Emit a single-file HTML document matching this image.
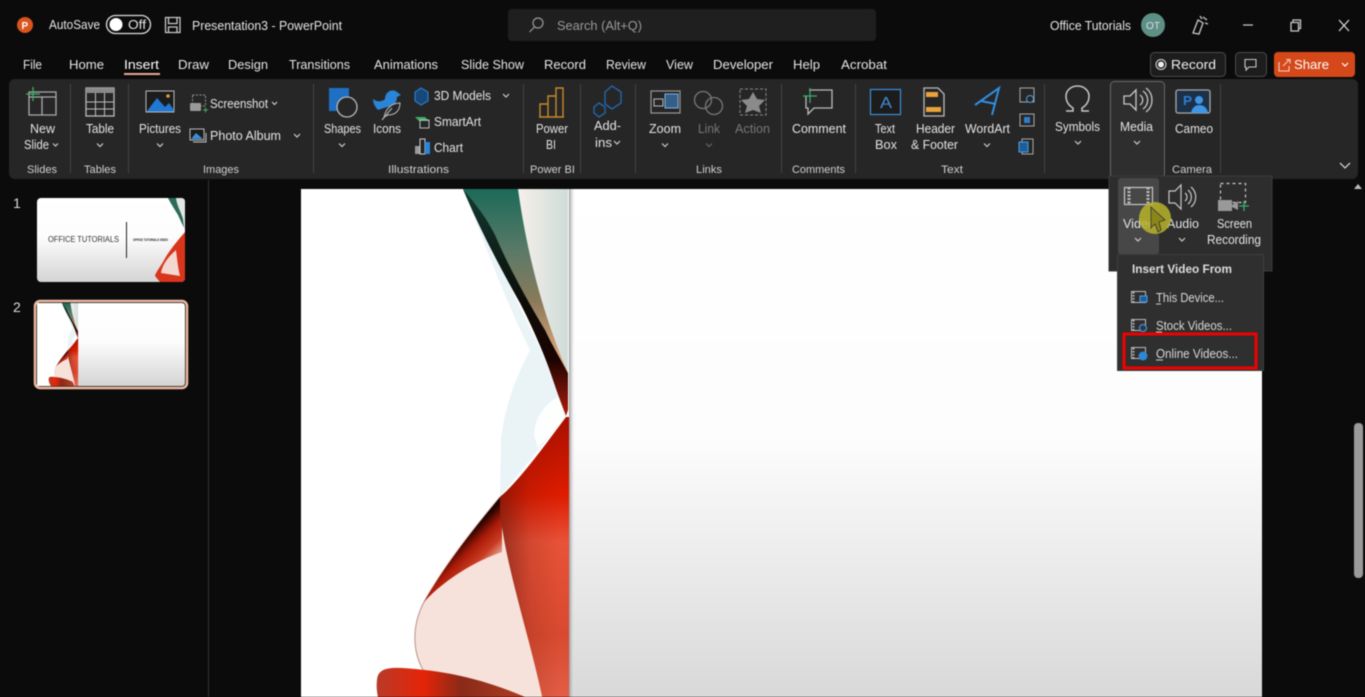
<!DOCTYPE html>
<html><head><meta charset="utf-8"><style>
html,body{margin:0;padding:0;background:#0b0b0b;overflow:hidden}
svg{display:block;filter:blur(.45px)}
text{font-family:"Liberation Sans",sans-serif;font-size:12.5px;fill:#e4e4e4}
.g{font-size:11px;fill:#d0d0d0}
.d{fill:#777}
.ic{fill:none;stroke:#c8c8c8;stroke-width:1.3}
.ch{fill:none;stroke:#ccc;stroke-width:1.2}
.sep{stroke:#444;stroke-width:1}
</style></head><body>
<svg width="1365" height="697" viewBox="0 0 1365 697" xmlns="http://www.w3.org/2000/svg">
<defs>
<linearGradient id="sl" x1="0" y1="0" x2="0" y2="1"><stop offset="0" stop-color="#fff"/><stop offset=".46" stop-color="#fdfdfd"/><stop offset=".66" stop-color="#eeeeee"/><stop offset="1" stop-color="#d4d4d4"/></linearGradient>
<linearGradient id="gr" x1="0" y1="189" x2="0" y2="370" gradientUnits="userSpaceOnUse"><stop offset="0" stop-color="#1c6a58"/><stop offset=".35" stop-color="#5c7a68"/><stop offset=".62" stop-color="#8a7a5a"/><stop offset=".85" stop-color="#c89a70"/><stop offset="1" stop-color="#e8b890"/></linearGradient>
<linearGradient id="li" x1="518" y1="0" x2="568" y2="0" gradientUnits="userSpaceOnUse"><stop offset="0" stop-color="#f6efea"/><stop offset="1" stop-color="#cfdcd8"/></linearGradient>
<linearGradient id="dk" x1="0" y1="189" x2="0" y2="416" gradientUnits="userSpaceOnUse"><stop offset="0" stop-color="#123a30"/><stop offset=".5" stop-color="#0c0c08"/><stop offset=".75" stop-color="#1a0402"/><stop offset="1" stop-color="#b01c0a"/></linearGradient>
<linearGradient id="rd" x1="0" y1="417" x2="0" y2="729" gradientUnits="userSpaceOnUse"><stop offset="0" stop-color="#a81000"/><stop offset=".25" stop-color="#de1c00"/><stop offset=".4" stop-color="#e85238"/><stop offset=".7" stop-color="#d84a30"/><stop offset="1" stop-color="#e86850"/></linearGradient>
<linearGradient id="rdl" x1="500" y1="0" x2="560" y2="0" gradientUnits="userSpaceOnUse"><stop offset="0" stop-color="#501008" stop-opacity=".55"/><stop offset=".5" stop-color="#601008" stop-opacity=".15"/><stop offset="1" stop-color="#601008" stop-opacity="0"/></linearGradient>
<linearGradient id="rd2" x1="476" y1="526" x2="506" y2="556" gradientUnits="userSpaceOnUse"><stop offset="0" stop-color="#200200"/><stop offset=".3" stop-color="#a81a08"/><stop offset=".6" stop-color="#c83a20"/><stop offset="1" stop-color="#f3d0c4"/></linearGradient>
<linearGradient id="rb" x1="377" y1="0" x2="530" y2="0" gradientUnits="userSpaceOnUse"><stop offset="0" stop-color="#b83a28"/><stop offset=".3" stop-color="#e62408"/><stop offset=".55" stop-color="#8a2a18"/><stop offset="1" stop-color="#b04024"/></linearGradient>
<linearGradient id="shd" x1="0" y1="0" x2="1" y2="0"><stop offset="0" stop-color="#999"/><stop offset="1" stop-color="#f0f0f0" stop-opacity="0"/></linearGradient>
<clipPath id="artc"><rect x="301" y="189" width="268" height="540"/></clipPath>
<g id="art" clip-path="url(#artc)">
<rect x="301" y="189" width="268" height="540" fill="#fff"/>
<path d="M518,189H568V372C540,310 525,240 518,189Z" fill="url(#li)"/>
<path d="M468,200C490,260 510,310 530,350C520,370 505,400 501,440L500,497L566,416L553,380C540,345 525,320 510,285C495,250 480,225 468,200Z" fill="#eaf4f7"/>
<path d="M563,395C548,400 535,415 534,435L538,448L565,417Z" fill="#fdfefe"/>
<path d="M463,189H518C525,240 540,310 568,372L545,340L523,303C500,268 478,225 463,189Z" fill="url(#gr)"/>
<path d="M463,189C478,225 497,262 520,303C530,322 545,355 553,380C558,395 563,408 566,416L568,410V373C560,358 552,345 545,330C530,305 510,270 495,235C485,215 472,200 463,189Z" fill="url(#dk)"/>
<path d="M500,497C470,530 440,570 422,605C412,630 414,655 423,670L545,729H550C538,660 505,570 500,510Z" fill="#f6e2da"/>
<path d="M500,497C475,527 445,565 424,602C412,625 412,650 423,670" fill="none" stroke="#b89088" stroke-width="1"/>
<path d="M502,495C475,527 445,565 424,602C446,578 478,560 502,552Z" fill="url(#rd2)"/>
<path d="M500,497C520,480 545,445 566,417H569V729H548C538,660 505,570 500,510Z" fill="url(#rd)"/>
<path d="M500,497C520,480 545,445 566,417H569V729H548C538,660 505,570 500,510Z" fill="url(#rdl)"/>
<path d="M377,680C378,665 395,667 425,670C470,675 505,688 532,700L545,729H392C382,715 375,695 377,680Z" fill="url(#rb)"/>
</g>
</defs>

<rect width="1365" height="697" fill="#0b0b0b"/>

<!-- title bar -->
<circle cx="25" cy="25" r="8" fill="#d9541e"/>
<text x="21.500" y="29" style="font-size:10px;font-weight:bold;fill:#fff">P</text>
<text x="49" y="29" textLength="51" lengthAdjust="spacingAndGlyphs">AutoSave</text>
<rect x="106.500" y="15.500" width="44" height="18" rx="9" fill="none" stroke="#ddd" stroke-width="1.300"/>
<circle cx="116" cy="24.500" r="6.500" fill="#fff"/>
<text x="128" y="29" textLength="18" lengthAdjust="spacingAndGlyphs">Off</text>
<path class="ic" d="M165.500,17.500H180V32.500H165.500ZM168.500,17.500V23.500H177V17.500M168.500,32.500V27H177V32.500"/>
<text x="192" y="30" textLength="150" lengthAdjust="spacingAndGlyphs">Presentation3  -  PowerPoint</text>
<rect x="508" y="9" width="368" height="32" rx="4" fill="#1f1f1f"/>
<circle cx="538" cy="23" r="5" fill="none" stroke="#999" stroke-width="1.200"/><path d="M534.500,27L529.500,32" stroke="#999" stroke-width="1.200"/>
<text x="557" y="30" textLength="85" lengthAdjust="spacingAndGlyphs" style="fill:#9a9a9a">Search (Alt+Q)</text>
<text x="1050" y="30" textLength="81" lengthAdjust="spacingAndGlyphs">Office Tutorials</text>
<circle cx="1153" cy="25" r="12" fill="#5e8f85"/><text x="1146" y="29" textLength="14" lengthAdjust="spacingAndGlyphs" style="font-size:10px;fill:#dde">OT</text>
<path class="ic" d="M1193,33L1198,20L1203,23L1199,34ZM1203,17L1207,20M1205,23L1208,24M1200,16L1202,19"/>
<path d="M1243,25H1253" stroke="#ccc" stroke-width="1.200"/>
<path class="ic" d="M1291,22.500H1298.500V31H1291ZM1293,22V20H1300.500V28.500H1299"/>
<path d="M1339,20L1349,31M1349,20L1339,31" stroke="#ddd" stroke-width="1.200"/>

<!-- tabs -->
<text x="23" y="69" textLength="19" lengthAdjust="spacingAndGlyphs">File</text>
<text x="69" y="69" textLength="35" lengthAdjust="spacingAndGlyphs">Home</text>
<text x="124" y="69" textLength="35" lengthAdjust="spacingAndGlyphs" style="fill:#fff">Insert</text>
<rect x="124" y="73" width="36" height="2" fill="#e8a890"/>
<text x="178" y="69" textLength="31" lengthAdjust="spacingAndGlyphs">Draw</text>
<text x="228" y="69" textLength="40" lengthAdjust="spacingAndGlyphs">Design</text>
<text x="289" y="69" textLength="61" lengthAdjust="spacingAndGlyphs">Transitions</text>
<text x="374" y="69" textLength="64" lengthAdjust="spacingAndGlyphs">Animations</text>
<text x="461" y="69" textLength="63" lengthAdjust="spacingAndGlyphs">Slide Show</text>
<text x="544" y="69" textLength="42" lengthAdjust="spacingAndGlyphs">Record</text>
<text x="606" y="69" textLength="40" lengthAdjust="spacingAndGlyphs">Review</text>
<text x="666" y="69" textLength="27" lengthAdjust="spacingAndGlyphs">View</text>
<text x="713" y="69" textLength="60" lengthAdjust="spacingAndGlyphs">Developer</text>
<text x="793" y="69" textLength="27" lengthAdjust="spacingAndGlyphs">Help</text>
<text x="841" y="69" textLength="46" lengthAdjust="spacingAndGlyphs">Acrobat</text>

<rect x="1150.500" y="52.500" width="75" height="24" rx="4" fill="#1d1d1d" stroke="#4a4a4a"/>
<circle cx="1161" cy="64.500" r="5" fill="none" stroke="#ddd"/><circle cx="1161" cy="64.500" r="3" fill="#eee"/>
<text x="1171" y="69" textLength="45" lengthAdjust="spacingAndGlyphs" style="fill:#eee">Record</text>
<rect x="1235.500" y="52.500" width="31" height="24" rx="4" fill="#1d1d1d" stroke="#4a4a4a"/>
<path class="ic" d="M1245,59.500H1256V67H1249L1246,70V67H1245Z" style="stroke-width:1.100"/>
<rect x="1274" y="52" width="81" height="25" rx="4" fill="#d4481a"/>
<path d="M1279,62V71H1289V66M1283,66L1289,60M1286,59.500H1290V63.500" fill="none" stroke="#f2d0c0" stroke-width="1.100"/>
<text x="1294" y="69" textLength="35" lengthAdjust="spacingAndGlyphs" style="fill:#fff;font-size:12.500px">Share</text>
<path d="M1342,63L1345,66L1348,63" fill="none" stroke="#fff" stroke-width="1.200"/>

<!-- ribbon -->
<rect x="9" y="79" width="1349" height="100" rx="6" fill="#262626"/>
<g class="sep">
<path d="M70.500,84V173M128.500,84V173M313.500,84V173M523.500,84V173M580.500,84V173M635.500,84V173M781.500,84V173M855.500,84V173M1044.500,84V173M1220.500,84V173"/>
</g>
<rect x="1110.500" y="81.500" width="54" height="96" rx="4" fill="#2e2e2e" stroke="#6a6a6a"/>

<!-- New slide -->
<path class="ic" d="M29,92H56V115H29ZM29,97H56M42,97V115" style="stroke:#aaa"/>
<path d="M26,94H40M33,87V101" stroke="#3fae6a" stroke-width="1.300"/>
<text x="30" y="133" textLength="25" lengthAdjust="spacingAndGlyphs">New</text>
<text x="24" y="149" textLength="25" lengthAdjust="spacingAndGlyphs">Slide</text>
<path class="ch" d="M53,143.500L55.500,146L58,143.500"/>
<text class="g" x="27" y="173" textLength="30" lengthAdjust="spacingAndGlyphs">Slides</text>
<!-- Table -->
<rect x="86" y="88" width="28" height="28" fill="none" stroke="#bbb" stroke-width="1.300"/><rect x="86" y="88" width="28" height="5" fill="#8a8a8a"/>
<path d="M86,102H114M86,109H114M95.500,93V116M104.500,93V116" stroke="#bbb"/>
<text x="86" y="133" textLength="28" lengthAdjust="spacingAndGlyphs">Table</text>
<path class="ch" d="M97,143.500L100,146.500L103,143.500"/>
<text class="g" x="84" y="173" textLength="32" lengthAdjust="spacingAndGlyphs">Tables</text>
<!-- Pictures -->
<rect x="146" y="91" width="28" height="21" fill="#1c1c1c" stroke="#bbb"/>
<path d="M147,111L157,98L165,107L169,103L174,110V111.500H147Z" fill="#1f78d1"/><circle cx="168" cy="96" r="1.800" fill="#d9a040"/>
<text x="139" y="133" textLength="42" lengthAdjust="spacingAndGlyphs">Pictures</text>
<path class="ch" d="M157,143.500L160,146.500L163,143.500"/>
<rect x="192.500" y="95" width="13" height="11" fill="none" stroke="#999" stroke-dasharray="2 1.500"/><rect x="190" y="103" width="11" height="8" fill="#999" rx="1"/><path d="M203,110H208M205.500,107.500V112.500" stroke="#3fae6a"/>
<text x="210" y="108" textLength="58" lengthAdjust="spacingAndGlyphs">Screenshot</text>
<path class="ch" d="M272,102L274.500,104.500L277,102"/>
<rect x="190" y="129" width="14" height="11" fill="#1c1c1c" stroke="#bbb"/><path d="M191,139L196,133L203,139Z" fill="#3a8fdc"/><path class="ic" d="M193,142H206V133" style="stroke-width:1"/>
<text x="210" y="140" textLength="71" lengthAdjust="spacingAndGlyphs">Photo Album</text>
<path class="ch" d="M294,134L297,137L300,134"/>
<text class="g" x="203" y="173" textLength="36" lengthAdjust="spacingAndGlyphs">Images</text>
<!-- Shapes -->
<path d="M329,88H349V101A11,11 0 0 0 338,111H329Z" fill="#1f6fc4"/>
<circle cx="347" cy="107" r="10" fill="#262626" stroke="#bbb" stroke-width="1.300"/>
<text x="324" y="133" textLength="37" lengthAdjust="spacingAndGlyphs">Shapes</text>
<path class="ch" d="M339,143.500L342,146.500L345,143.500"/>
<!-- Icons -->
<path d="M373,99C377,102 382,102 385,99C385,92 392,88 397,92L401,95L397,97C397,103 393,107 387,107L378,110C375,107 373,103 373,99Z" fill="#2a84d8"/>
<path d="M384,117C386,108 392,103 400,103C400,110 396,115 388,115Z" fill="#262626" stroke="#bbb"/><path d="M382,120L392,108" stroke="#bbb"/>
<text x="373" y="133" textLength="28" lengthAdjust="spacingAndGlyphs">Icons</text>
<!-- illus small -->
<path d="M415,92L421,88L428,92V101L421,105L415,101Z" fill="#16497a" stroke="#2f86d6"/>
<text x="434" y="100" textLength="57" lengthAdjust="spacingAndGlyphs">3D Models</text>
<path class="ch" d="M503,94L506,97L509,94"/>
<path d="M415,117H425L429,121H419Z" fill="#3fae6a"/><rect x="420" y="120" width="9" height="8" fill="none" stroke="#bbb"/>
<text x="434" y="126" textLength="47" lengthAdjust="spacingAndGlyphs">SmartArt</text>
<rect x="415" y="146" width="5" height="8" fill="#999"/><rect x="420" y="139" width="5" height="15" fill="none" stroke="#ccc"/><rect x="425" y="142" width="5" height="12" fill="#2a84d8"/>
<text x="434" y="152" textLength="29" lengthAdjust="spacingAndGlyphs">Chart</text>
<text class="g" x="388" y="173" textLength="61" lengthAdjust="spacingAndGlyphs">Illustrations</text>
<!-- Power BI -->
<path d="M540,117V104H548V117M548,117V96H556V117M556,117V88H563V117M539,117H564" fill="none" stroke="#c8892c" stroke-width="1.400"/>
<text x="536" y="133" textLength="32" lengthAdjust="spacingAndGlyphs">Power</text>
<text x="546" y="149" textLength="10" lengthAdjust="spacingAndGlyphs">BI</text>
<text class="g" x="530" y="173" textLength="45" lengthAdjust="spacingAndGlyphs">Power BI</text>
<!-- Add-ins -->
<path d="M605,92L612,86L621,92V103L612,109L605,104ZM594,107L599,103L605,107V113L599,117L594,113Z" fill="none" stroke="#2167ad" stroke-width="1.400"/>
<text x="594" y="130" textLength="27" lengthAdjust="spacingAndGlyphs">Add-</text>
<text x="595" y="147" textLength="17" lengthAdjust="spacingAndGlyphs">ins</text>
<path class="ch" d="M614,141L617,144L620,141"/>
<!-- Zoom -->
<rect x="651" y="91" width="29" height="22" fill="none" stroke="#999" stroke-width="1.200"/><rect x="665" y="94" width="13" height="14" fill="#355f88" stroke="#7fb6e6"/><rect x="654" y="99" width="9" height="7" fill="none" stroke="#bbb"/>
<text x="649" y="133" textLength="32" lengthAdjust="spacingAndGlyphs">Zoom</text>
<path class="ch" d="M662,143.500L665,146.500L668,143.500"/>
<!-- Link -->
<circle cx="703" cy="100" r="8.500" fill="none" stroke="#777" stroke-width="1.300"/><circle cx="714" cy="106" r="8.500" fill="none" stroke="#777" stroke-width="1.300"/>
<text class="d" x="698" y="133" textLength="22" lengthAdjust="spacingAndGlyphs">Link</text>
<path class="ch" style="stroke:#666" d="M706,143.500L709,146.500L712,143.500"/>
<text class="g" x="696" y="173" textLength="26" lengthAdjust="spacingAndGlyphs">Links</text>
<rect x="740" y="89" width="26" height="26" fill="none" stroke="#888" stroke-dasharray="3 2"/>
<path d="M753,92L757,99L765,100L759,106L761,113L753,110L745,113L747,106L741,100L749,99Z" fill="#8a8a8a"/>
<text class="d" x="735" y="133" textLength="35" lengthAdjust="spacingAndGlyphs">Action</text>
<!-- Comment -->
<path class="ic" d="M809,90H832V108H814L808,114V108H806V96" style="stroke:#bbb"/>
<path d="M803,96H817M810,88V103" stroke="#3fae6a" stroke-width="1.200"/>
<text x="792" y="133" textLength="54" lengthAdjust="spacingAndGlyphs">Comment</text>
<text class="g" x="792" y="173" textLength="53" lengthAdjust="spacingAndGlyphs">Comments</text>
<!-- Text box -->
<rect x="870.500" y="89.500" width="30" height="25" fill="#1c1c1c" stroke="#3f8ed8" stroke-width="1.200"/>
<text x="880" y="108" textLength="12" lengthAdjust="spacingAndGlyphs" style="font-size:16px;fill:#3f8ed8">A</text>
<text x="875" y="133" textLength="20" lengthAdjust="spacingAndGlyphs">Text</text>
<text x="875" y="149" textLength="22" lengthAdjust="spacingAndGlyphs">Box</text>
<path class="ic" d="M924,88H938L944,94V116H924Z" style="stroke:#bbb"/><rect x="926" y="92" width="12" height="5" fill="#e8a33a"/><rect x="926" y="107" width="15" height="5" fill="#e8a33a"/>
<text x="916" y="133" textLength="39" lengthAdjust="spacingAndGlyphs">Header</text>
<text x="911" y="149" textLength="47" lengthAdjust="spacingAndGlyphs">&amp; Footer</text>
<path d="M975,105L999,88L992,115M981,101L996,104" fill="none" stroke="#2f8fe0" stroke-width="2"/>
<text x="965" y="133" textLength="45" lengthAdjust="spacingAndGlyphs">WordArt</text>
<path class="ch" d="M984,143.500L987,146.500L990,143.500"/>
<rect x="1020" y="88" width="14" height="14" fill="none" stroke="#aaa"/><circle cx="1030" cy="99" r="3.500" fill="#262626" stroke="#4f9fe0"/>
<rect x="1020" y="114" width="14" height="12" fill="none" stroke="#aaa"/><rect x="1024" y="117" width="6" height="6" fill="#2f7fc8"/>
<rect x="1022" y="139" width="11" height="15" fill="none" stroke="#aaa"/><rect x="1019" y="142" width="9" height="10" fill="#1d5d9c" stroke="#4f9fe0"/>
<text class="g" x="941" y="173" textLength="22" lengthAdjust="spacingAndGlyphs">Text</text>
<!-- Symbols -->
<path d="M1066,111H1073V108C1068,105 1066,101 1066,96A11.500,10 0 0 1 1089,96C1089,101 1087,105 1082,108V111H1089" fill="none" stroke="#c8c8c8" stroke-width="1.500"/>
<text x="1055" y="131" textLength="45" lengthAdjust="spacingAndGlyphs">Symbols</text>
<path class="ch" d="M1075,141L1078,144L1081,141"/>
<!-- Media -->
<path class="ic" d="M1124,96H1130L1136,90V110L1130,104H1124ZM1140,95A6,6 0 0 1 1140,105M1143,91A11,11 0 0 1 1143,109M1146,88A15,15 0 0 1 1146,112"/>
<text x="1120" y="131" textLength="33" lengthAdjust="spacingAndGlyphs">Media</text>
<path class="ch" d="M1134,141L1137,144L1140,141"/>
<!-- Cameo -->
<rect x="1176" y="90" width="34" height="23" rx="2" fill="#1c3048" stroke="#aaa" stroke-width="1.300"/>
<text x="1183" y="105" textLength="9" lengthAdjust="spacingAndGlyphs" style="font-size:13px;fill:#2d7fd0;font-weight:bold">P</text>
<circle cx="1199" cy="100" r="4" fill="#3f96e4"/><path d="M1191,113C1192,107 1196,105 1199,105C1203,105 1207,107 1208,113Z" fill="#3f96e4"/>
<text x="1175" y="133" textLength="38" lengthAdjust="spacingAndGlyphs">Cameo</text>
<text class="g" x="1172" y="173" textLength="40" lengthAdjust="spacingAndGlyphs">Camera</text>
<path d="M1340,163L1345,168L1350,163" fill="none" stroke="#ccc" stroke-width="1.300"/>

<!-- left panel -->
<path d="M208.500,180V697" stroke="#333"/>
<text x="13" y="208" style="font-size:14px;fill:#ddd">1</text>
<text x="13" y="312" style="font-size:14px;fill:#ddd">2</text>
<rect x="37" y="198" width="148" height="84" rx="4" fill="url(#sl)"/>
<path d="M176,198H181Q185,198 185,202V232L183,219C181,212 177,206 176,198Z" fill="#e2e6e2"/>
<path d="M168,198H176C177,206 181,212 183,219L184,228L178,215C175,210 171,204 168,198Z" fill="#2c6a5a"/>
<path d="M185,232C178,240 168,252 163,262C158,270 155,274 155,276L160,282H181Q185,282 185,278Z" fill="#d8351c"/>
<path d="M176,250C168,257 162,265 161,273L180,276C178,268 177,258 176,250Z" fill="#f3d8cf"/>
<text x="48" y="242" textLength="71" lengthAdjust="spacingAndGlyphs" style="font-size:8px;fill:#333">OFFICE TUTORIALS</text>
<path d="M126.500,222V258" stroke="#222"/>
<text x="133" y="241" textLength="35" lengthAdjust="spacingAndGlyphs" style="font-size:4px;fill:#222;font-weight:bold">OFFICE TUTORIALS VIDEO</text>
<rect x="35" y="301" width="152" height="87" rx="5" fill="#111" stroke="#eeb9a0" stroke-width="2.500"/>
<rect x="37" y="303" width="148" height="83" rx="3" fill="url(#sl)"/>
<use href="#art" transform="translate(37 303) scale(.154) translate(-301 -189)"/>

<!-- slide -->
<rect x="301" y="189" width="961" height="540" fill="url(#sl)"/>
<rect x="569" y="189" width="6" height="540" fill="url(#shd)"/>
<use href="#art"/>

<!-- scrollbar -->
<path d="M1358,184L1362,189H1354Z" fill="#bbb"/>
<rect x="1354" y="423" width="9" height="155" rx="4" fill="#9a9a9a"/>

<!-- Media dropdown -->
<rect x="1109" y="176" width="163" height="95" fill="#2d2d2d" stroke="#3c3c3c"/>
<rect x="1118" y="178" width="41" height="76" rx="3" fill="#474747"/>
<g fill="none" stroke="#c8c8c8" stroke-width="1.200">
<rect x="1124.500" y="187.500" width="28" height="17"/>
<path d="M1129,187.500V204.500M1148,187.500V204.500" stroke-dasharray="2 1.500" stroke-width="3" stroke="#bbb"/>
<path d="M1169,191H1175L1181,185V209L1175,203H1169ZM1185,193A5,5 0 0 1 1185,201M1188,190A9,9 0 0 1 1188,204M1191,187A13,13 0 0 1 1191,207"/>
<rect x="1220.500" y="183.500" width="25" height="19" stroke-dasharray="3 3"/>
</g>
<rect x="1218" y="200" width="14" height="11" fill="#999"/><path d="M1232,205L1238,201V210L1232,207Z" fill="#999"/><path d="M1239,206H1249M1244,201V211" stroke="#3fae6a" stroke-width="1.300"/>
<text x="1123" y="228" textLength="32" lengthAdjust="spacingAndGlyphs">Video</text>
<path class="ch" d="M1135,238L1138,241L1141,238"/>
<text x="1167" y="228" textLength="32" lengthAdjust="spacingAndGlyphs">Audio</text>
<path class="ch" d="M1179,238L1182,241L1185,238"/>
<text x="1217" y="228" textLength="35" lengthAdjust="spacingAndGlyphs">Screen</text>
<text x="1207" y="244" textLength="54" lengthAdjust="spacingAndGlyphs">Recording</text>

<rect x="1117.500" y="254.500" width="146" height="116" fill="#2f2f2f" stroke="#3e3e3e"/>
<text x="1132" y="273" textLength="100" lengthAdjust="spacingAndGlyphs" style="font-weight:bold;font-size:12px;fill:#ddd">Insert Video From</text>
<g fill="none" stroke="#bbb"><rect x="1131.500" y="291.500" width="14" height="11"/><rect x="1131.500" y="319.500" width="14" height="11"/><rect x="1131.500" y="347.500" width="14" height="11"/></g>
<g stroke="#bbb" stroke-width="2" stroke-dasharray="1.500 1.500"><path d="M1133.500,292V302M1133.500,320V330M1133.500,348V358"/></g>
<rect x="1140" y="296" width="7" height="6" fill="#1d5d9c" stroke="#4f9fe0"/>
<circle cx="1143" cy="328" r="3.500" fill="#263a4c" stroke="#4f9fe0"/>
<circle cx="1143" cy="356" r="4.500" fill="#2f86d6"/>
<text x="1156" y="302" textLength="68" lengthAdjust="spacingAndGlyphs" style="fill:#d8d8d8">This Device...</text>
<text x="1156" y="330" textLength="76" lengthAdjust="spacingAndGlyphs" style="fill:#d8d8d8">Stock Videos...</text>
<text x="1156" y="358" textLength="82" lengthAdjust="spacingAndGlyphs" style="fill:#d8d8d8">Online Videos...</text>
<path d="M1156,304H1161M1156,332H1162M1156,360H1163" stroke="#ccc"/>
<rect x="1124" y="334" width="132" height="34" fill="none" stroke="#f00000" stroke-width="3"/>

<!-- cursor highlight -->
<circle cx="1155" cy="218" r="16" fill="#b8b42a" fill-opacity=".85"/>
<path d="M1151,207V228L1155,224L1158,232L1161,230L1159,222L1165,220Z" fill="#8a8618" stroke="#333" stroke-width=".8"/>
</svg>
</body></html>
